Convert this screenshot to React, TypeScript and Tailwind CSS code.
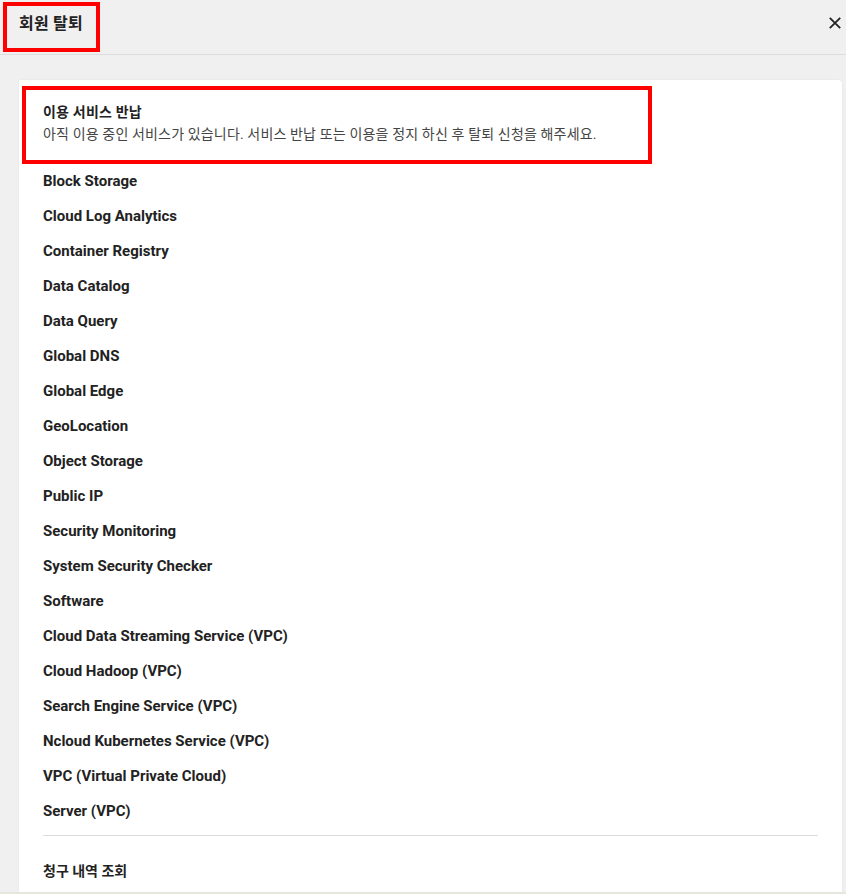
const services = [
    "Block Storage",
    "Cloud Log Analytics",
    "Container Registry",
    "Data Catalog",
    "Data Query",
    "Global DNS",
    "Global Edge",
    "GeoLocation",
    "Object Storage",
    "Public IP",
    "Security Monitoring",
    "System Security Checker",
    "Software",
    "Cloud Data Streaming Service (VPC)",
    "Cloud Hadoop (VPC)",
    "Search Engine Service (VPC)",
    "Ncloud Kubernetes Service (VPC)",
    "VPC (Virtual Private Cloud)",
    "Server (VPC)",
];

export default function App() {
    return (
        <div
            className="h-[894px] w-full overflow-hidden flex flex-col bg-[#f0f0f0] text-[#222] border-b-2 border-[#e6e6de]"
            style={{ fontFamily: "Roboto, 'Noto Sans CJK KR', sans-serif" }}
        >
            {/* Header */}
            <div className="relative h-[55px] shrink-0 flex items-center justify-between pl-[19px] pr-[5px] border-b border-[#dcdcdc]">
                <h1 className="text-[16px] font-bold leading-none -mt-[7px] tracking-[0.2px]">회원 탈퇴</h1>
                <button className="-mt-[8px] text-[#222]">
                    <svg width="12" height="12" viewBox="0 0 12 12" fill="none" stroke="currentColor" strokeWidth="1.8">
                        <path d="M0.8 0.8 11.2 11.2M11.2 0.8 0.8 11.2" />
                    </svg>
                </button>
                <div className="absolute left-[3px] top-[2px] w-[97px] h-[50px] border-4 border-[#ff0000] pointer-events-none" />
            </div>

            {/* Body */}
            <div className="flex-1 overflow-hidden pt-[25px] pl-[19px] pr-[4px]">
                <div className="relative bg-white rounded-tr-[4px] shadow-[0_0_2px_rgba(0,0,0,0.08)] h-full px-[24px] pt-[21px]">
                    <div className="absolute left-[3px] top-[6px] w-[630px] h-[78px] border-4 border-[#ff0000] pointer-events-none" />

                    <h2 className="text-[14px] font-bold leading-[22px] tracking-[0.2px]">이용 서비스 반납</h2>
                    <p className="text-[14px] leading-[22px] text-[#444] tracking-[0.15px]">
                        아직 이용 중인 서비스가 있습니다. 서비스 반납 또는 이용을 정지 하신 후 탈퇴 신청을 해주세요.
                    </p>

                    <ul className="mt-[19px]">
                        {services.map((name) => (
                            <li key={name} className="h-[35px] flex items-center text-[15px] font-bold">
                                {name}
                            </li>
                        ))}
                    </ul>

                    <div className="mt-[6px] border-t border-[#dcdcdc]" />

                    <div className="mt-[18px] h-[35px] flex items-center text-[14px] font-bold">청구 내역 조회</div>
                </div>
            </div>
        </div>
    );
}
